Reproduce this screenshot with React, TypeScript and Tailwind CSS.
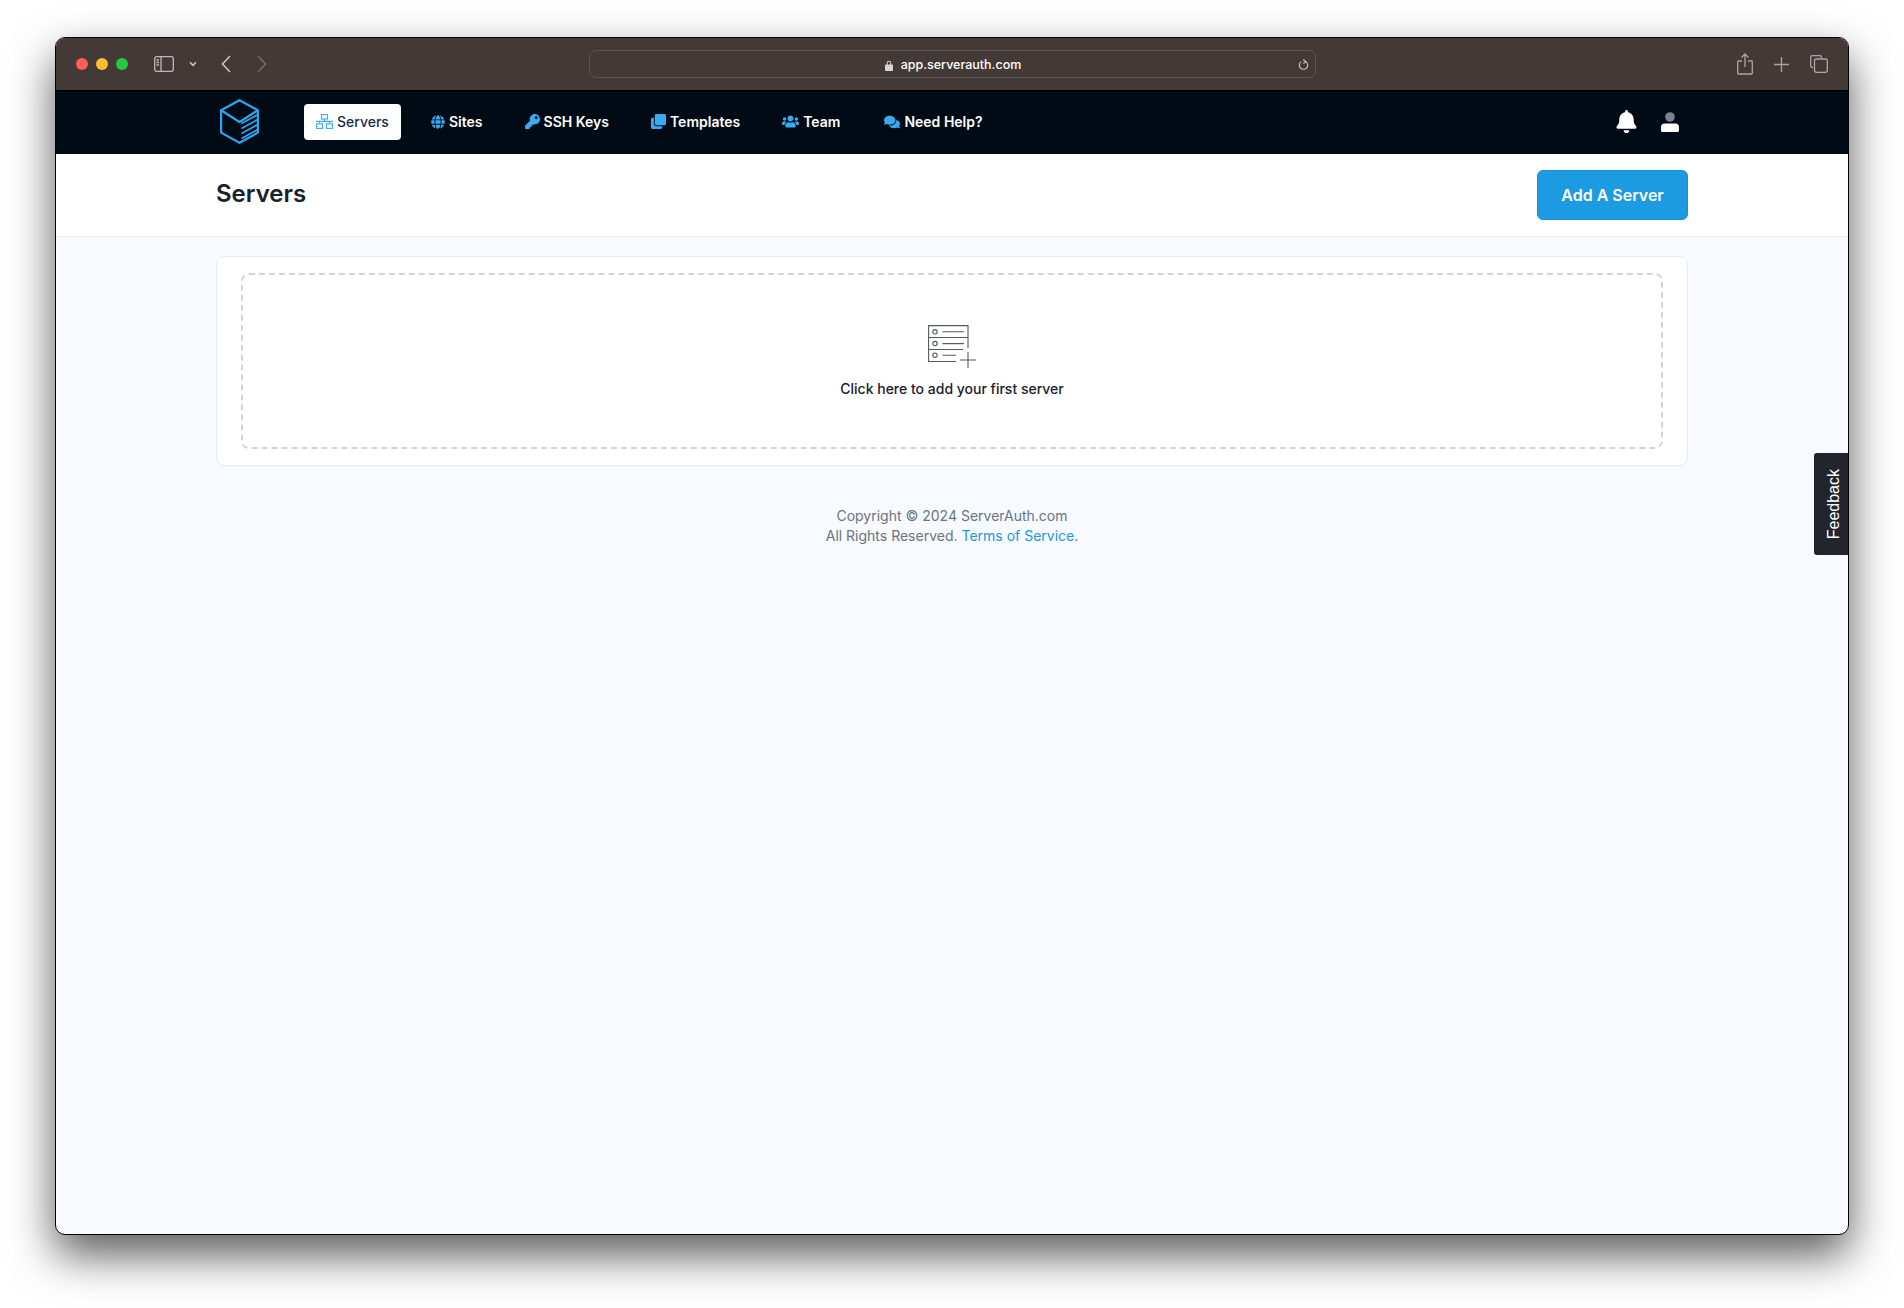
import { FaBell, FaClone, FaComments, FaGlobe, FaKey, FaUsers } from "react-icons/fa";

function Logo() {
  return (
    <svg width="39" height="45" viewBox="0 0 39 45" fill="none" stroke="#2ba6ee" strokeWidth="2.2" className="shrink-0">
      <path d="M19.5 1.2 1.1 11.2V33.6L19.5 43.8 37.9 33.6V11.2Z" strokeLinejoin="round" />
      <path d="M1.1 11.2 19.5 23 37.9 11.2" strokeLinejoin="round" />
      <path d="M21.5 24.5 37.9 15.5M21.5 29.5 37.9 20.5M21.5 34.5 37.9 25.5M21.5 39.5 37.9 30.5" strokeWidth="1.8" />
    </svg>
  );
}

function NetIcon() {
  return (
    <svg width="17" height="15" viewBox="0 0 17 15" fill="none" stroke="#3aa9f0" strokeWidth="1.1" className="shrink-0">
      <rect x="5.5" y="0.6" width="6" height="4.4" />
      <rect x="0.6" y="9.8" width="6" height="4.6" />
      <rect x="10.4" y="9.8" width="6" height="4.6" />
      <path d="M8.5 5V7.4M0 7.4H17M3.6 7.4V9.8M13.4 7.4V9.8" />
    </svg>
  );
}

function NavItem({ icon, label }: { icon: React.ReactNode; label: string }) {
  return (
    <a className="flex h-9 items-center gap-1 px-3 text-sm font-semibold text-white">
      {icon}
      <span>{label}</span>
    </a>
  );
}

function EmptyIcon() {
  return (
    <svg width="48" height="43" viewBox="0 0 48 43" fill="none" stroke="#55595f" strokeWidth="1.1">
      <path d="M28 36.5H.6V.6H40V23M.6 12.5H40M.6 24.5H35" />
      <circle cx="7" cy="6.8" r="2.2" />
      <circle cx="7" cy="18.6" r="2.2" />
      <circle cx="7" cy="30.2" r="2.2" />
      <path d="M14.5 6.8H36M14.5 18.6H36M14.5 30.2H28M32 35H48M40 27V43" />
    </svg>
  );
}

export default function App() {
  return (
    <div className="h-[1308px] w-[1904px] overflow-hidden bg-white pl-[55px] pt-[37px] font-['Inter',sans-serif]">
      <div className="relative flex h-[1198px] w-[1794px] flex-col overflow-hidden rounded-[10px] border border-black bg-[#f7faff] shadow-[0_20px_45px_rgba(0,0,0,0.65)]">
        {/* Browser toolbar */}
        <div className="flex h-[53px] shrink-0 items-center justify-between border-b border-black bg-[#433a38] pl-[20px] pr-[20px]">
          <div className="flex items-center">
            <span className="h-3 w-3 rounded-full bg-[#ff5f57]" />
            <span className="ml-2 h-3 w-3 rounded-full bg-[#febc2e]" />
            <span className="ml-2 h-3 w-3 rounded-full bg-[#28c840]" />
            <svg className="ml-[26px]" width="20" height="16" viewBox="0 0 20 16" fill="none" stroke="#bdb9b7" strokeWidth="1.3">
              <rect x="0.7" y="0.7" width="18.6" height="14.6" rx="2" />
              <path d="M7 .7V15.3M2.5 4H5M2.5 6.5H5M2.5 9H5" />
            </svg>
            <svg className="ml-[15px]" width="8" height="6" viewBox="0 0 8 6" fill="none" stroke="#c9c5c3" strokeWidth="1.5">
              <path d="M1 1.2 4 4.3 7 1.2" />
            </svg>
            <svg className="ml-[24px]" width="10" height="18" viewBox="0 0 10 18" fill="none" stroke="#c9c5c3" strokeWidth="1.6">
              <path d="M9 1 1.5 9 9 17" />
            </svg>
            <svg className="ml-[26px]" width="10" height="18" viewBox="0 0 10 18" fill="none" stroke="#716967" strokeWidth="1.6">
              <path d="M1 1 8.5 9 1 17" />
            </svg>
          </div>
          <div className="absolute left-[533px] flex h-[28px] w-[727px] items-center justify-center rounded-[7px] border border-[#5c5452] bg-[#433a38] pl-[1px] pt-[2px] text-[12.5px] font-medium text-white">
            <svg className="mr-[8px]" width="8" height="11" viewBox="0 0 8 11" fill="#d8d5d4" stroke="none">
              <path d="M1.7 4.5V3a2.3 2.3 0 0 1 4.6 0v1.5H7.2c.4 0 .8.3.8.8v4.9c0 .4-.4.8-.8.8H.8c-.4 0-.8-.4-.8-.8V5.300c0-.5.4-.8.8-.8ZM2.700 4.500h2.600V3a1.300 1.300 0 0 0-2.600 0Z" />
            </svg>
            <span>app.serverauth.com</span>
            <svg className="absolute right-[6px]" width="11" height="12" viewBox="0 0 11 12" fill="none" stroke="#c9c5c3" strokeWidth="1.1">
              <path d="M7.800 2.600A4.200 4.200 0 1 1 3.200 2.600M5.200 .5 7.800 2.600 5.400 4.500" />
            </svg>
          </div>
          <div className="flex items-center gap-[21px]">
            <svg width="16" height="22" viewBox="0 0 16 22" fill="none" stroke="#aaa5a3" strokeWidth="1.3">
              <path d="M5 8H1.500C1 8 .7 8.300 .7 8.800V20.200C.7 20.700 1 21 1.500 21H14.500C15 21 15.300 20.700 15.300 20.200V8.800C15.300 8.300 15 8 14.500 8H11M8 14V1M4.500 4.500 8 1 11.500 4.500" />
            </svg>
            <svg width="15" height="15" viewBox="0 0 15 15" fill="none" stroke="#aaa5a3" strokeWidth="1.3">
              <path d="M7.500 0V15M0 7.500H15" />
            </svg>
            <svg width="18" height="18" viewBox="0 0 18 18" fill="none" stroke="#aaa5a3" strokeWidth="1.3">
              <path d="M3 12.500H2.400C1.400 12.500 .7 11.800 .7 10.800V2.400C.7 1.400 1.400 .7 2.400 .7H9.800C10.800 .7 11.500 1.400 11.500 2.400V3" />
              <rect x="4.500" y="4" width="12.800" height="13.300" rx="2" />
            </svg>
          </div>
        </div>

        {/* App nav */}
        <div className="flex h-[63px] shrink-0 justify-center bg-[#010b16] pb-[2px]">
          <div className="flex w-[1472px] items-center justify-between">
            <div className="flex items-center">
              <div className="ml-1 mr-[45px]">
                <Logo />
              </div>
              <div className="flex items-center gap-[18px]">
                <a className="flex h-9 w-[97px] items-center gap-1 rounded bg-white pl-3 text-sm font-medium text-[#1a2b45]">
                  <NetIcon />
                  <span>Servers</span>
                </a>
                <NavItem icon={<FaGlobe className="text-[14px] text-[#3aa9f0]" />} label="Sites" />
                <NavItem icon={<FaKey className="text-[15px] text-[#3aa9f0]" />} label="SSH Keys" />
                <NavItem icon={<FaClone className="text-[15px] text-[#3aa9f0]" />} label="Templates" />
                <NavItem icon={<FaUsers className="text-[17px] text-[#3aa9f0]" />} label="Team" />
                <div className="ml-[2px]">
                  <NavItem icon={<FaComments className="text-[16px] text-[#3aa9f0]" />} label="Need Help?" />
                </div>
              </div>
            </div>
            <div className="flex items-center gap-[23px] pr-[9px]">
              <FaBell className="text-[23px] text-white" />
              <svg width="18" height="20" viewBox="0 0 18 20">
                <circle cx="9" cy="5" r="4.800" fill="#7a828c" />
                <path d="M3.500 11.500H14.500C16.500 11.500 18 13 18 15V18.500C18 19.300 17.300 20 16.500 20H1.500C.7 20 0 19.300 0 18.500V15C0 13 1.500 11.500 3.500 11.500Z" fill="#fff" />
              </svg>
            </div>
          </div>
        </div>

        {/* Page header */}
        <div className="flex h-[83px] shrink-0 justify-center border-b border-[#eef0f4] bg-white">
          <div className="flex w-[1472px] items-start justify-between pt-[16px]">
            <h1 className="mt-[8px] text-[24px] font-semibold leading-8 text-[#1a202c]">Servers</h1>
            <button className="h-[50px] w-[151px] rounded-md border border-[#1a8fd6] bg-[#1c9ae2] text-center text-base font-semibold text-white">
              Add A Server
            </button>
          </div>
        </div>

        {/* Content */}
        <div className="flex flex-col items-center pt-[19px]">
          <div className="h-[210px] w-[1472px] rounded-lg border border-[#e6e9ef] bg-white px-[24px] py-[16px]">
            <div className="flex h-full flex-col items-center rounded-lg border-2 border-dashed border-[#d1d5db] pt-[50px]">
              <EmptyIcon />
              <p className="mt-[11px] text-sm font-medium leading-5 text-[#1a202c]">Click here to add your first server</p>
            </div>
          </div>
          <div className="mt-[40px] text-center text-sm leading-5 text-[#6b7280]">
            <p>Copyright © 2024 ServerAuth.com</p>
            <p>
              All Rights Reserved. <a className="text-[#2196e3]">Terms of Service</a>.
            </p>
          </div>
        </div>

        {/* Feedback tab */}
        <div className="absolute right-0 top-[415px] flex h-[102px] w-[34px] items-center justify-center rounded-l-[3px] bg-[#22262c] pl-[5px]">
          <span className="rotate-180 font-['Liberation_Sans',sans-serif] text-base text-white [writing-mode:vertical-rl]">Feedback</span>
        </div>
      </div>
    </div>
  );
}
